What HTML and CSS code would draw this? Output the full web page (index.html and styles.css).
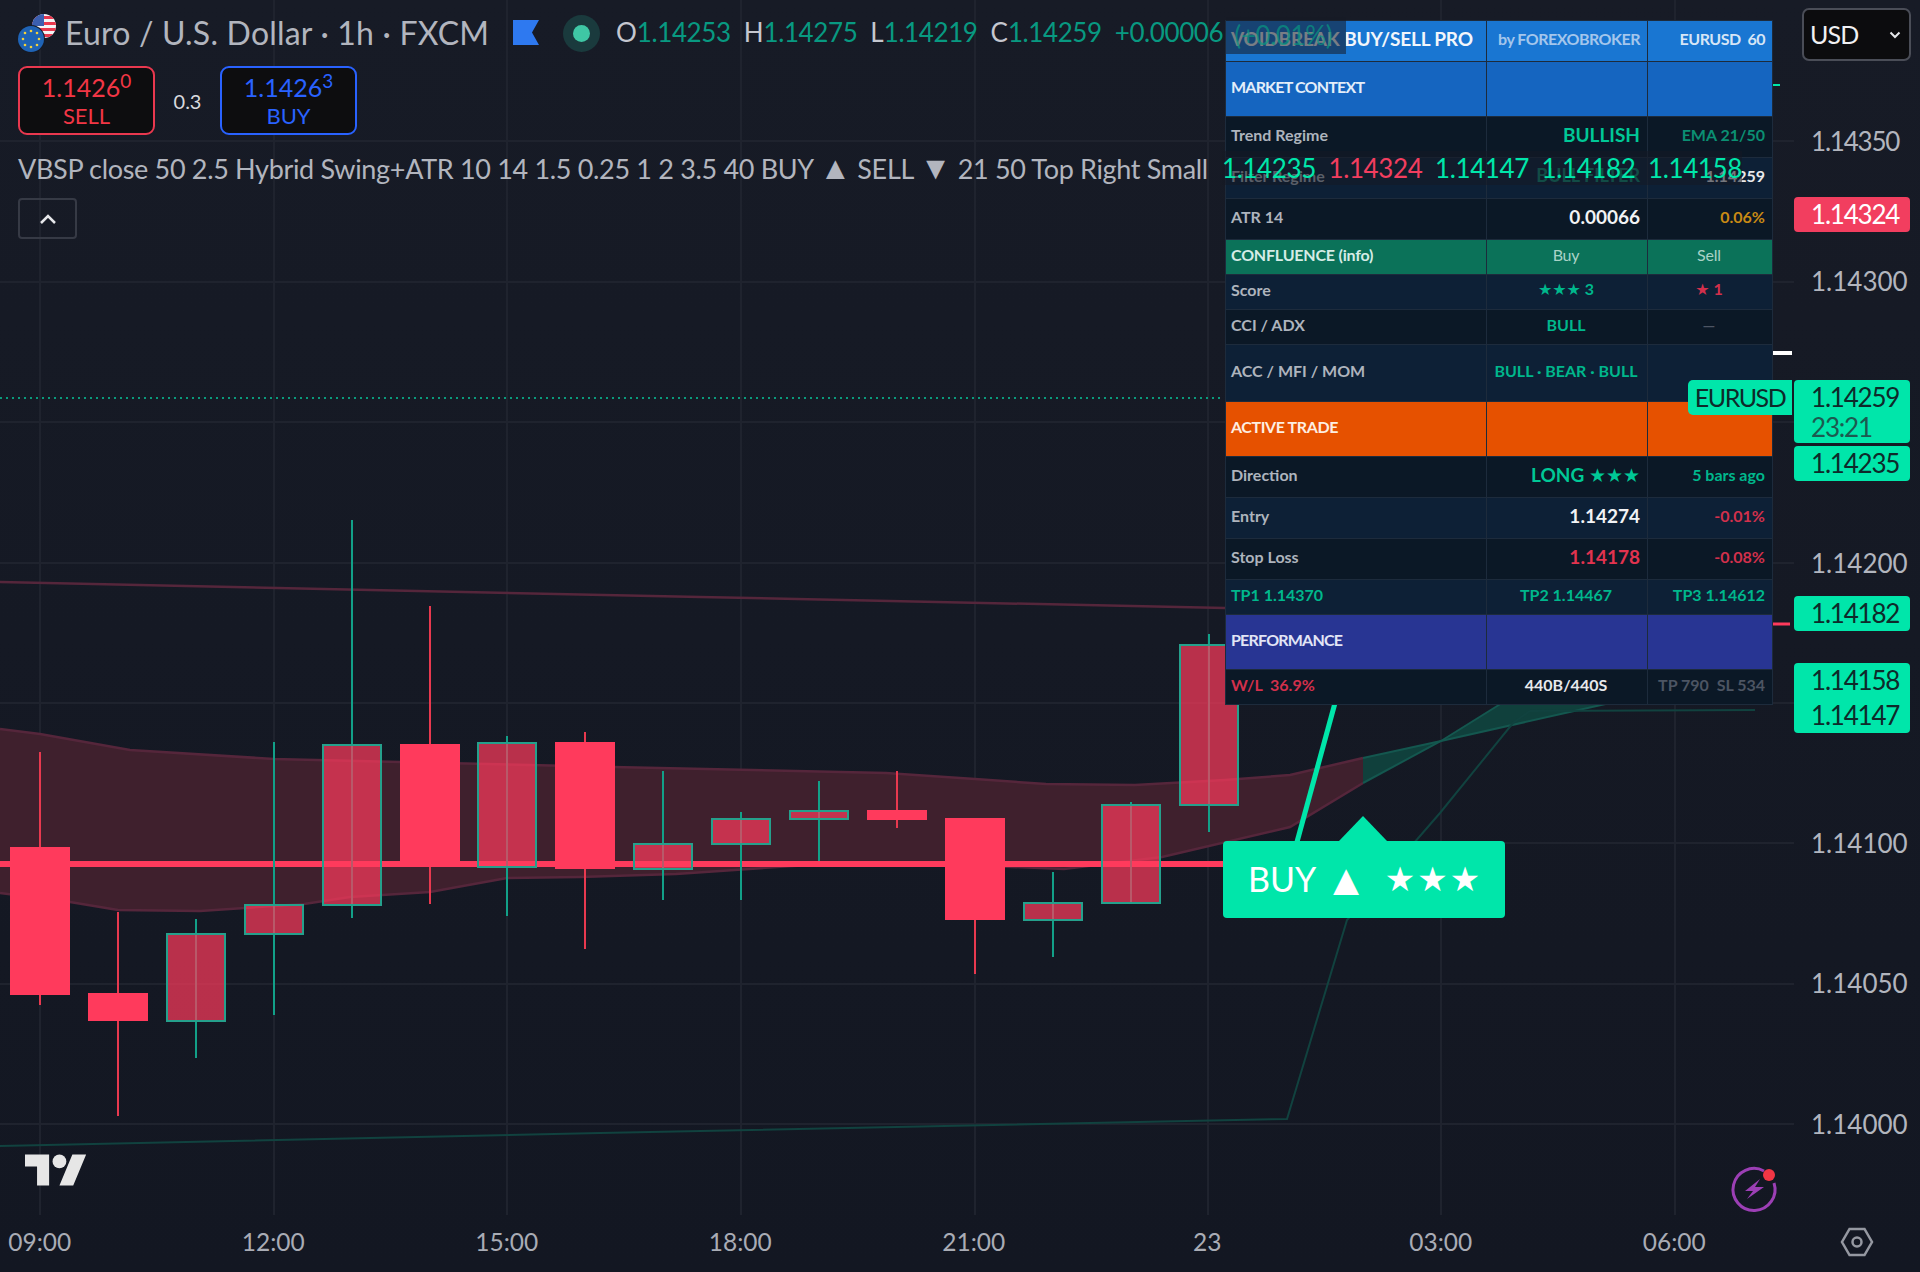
FILE: index.html
```html
<!DOCTYPE html>
<html lang="en">
<head>
    <meta charset="UTF-8">
    <meta name="viewport" content="width=device-width, initial-scale=1.0">
    <title>EURUSD 1h chart</title>
    <link rel="stylesheet" href="styles.css">
</head>
<body>

<div class="terminal">
    <div class="chart-pane">

        <!-- Chart drawing: grid, bands, lines, candles -->
        <svg class="chart-canvas" width="1794" height="1215" viewBox="0 0 1794 1215">
            <g class="grid">
                <line x1="40" y1="0" x2="40" y2="1215"/>
                <line x1="274" y1="0" x2="274" y2="1215"/>
                <line x1="507" y1="0" x2="507" y2="1215"/>
                <line x1="741" y1="0" x2="741" y2="1215"/>
                <line x1="975" y1="0" x2="975" y2="1215"/>
                <line x1="1208" y1="0" x2="1208" y2="1215"/>
                <line x1="1441" y1="0" x2="1441" y2="1215"/>
                <line x1="1675" y1="0" x2="1675" y2="1215"/>
                <line x1="0" y1="141" x2="1794" y2="141"/>
                <line x1="0" y1="282" x2="1794" y2="282"/>
                <line x1="0" y1="422" x2="1794" y2="422"/>
                <line x1="0" y1="563" x2="1794" y2="563"/>
                <line x1="0" y1="703" x2="1794" y2="703"/>
                <line x1="0" y1="843" x2="1794" y2="843"/>
                <line x1="0" y1="984" x2="1794" y2="984"/>
                <line x1="0" y1="1124" x2="1794" y2="1124"/>
            </g>

            <polygon class="band-red" points="0,729 40,734 130,750 274,759 400,762 613,767 886,773 975,779 1046,784 1135,785 1225,780 1290,775 1363,758 1363,783 1290,827 1162,857 1064,869 890,862 792,866 676,874 580,877 507,878 430,892 350,897 304,904 200,911 118,910 70,902 0,893"/>
            <polyline class="band-red-edge" points="0,729 40,734 130,750 274,759 400,762 613,767 886,773 975,779 1046,784 1135,785 1225,780 1290,775 1363,758"/>
            <polyline class="band-red-edge" points="0,893 70,902 118,910 200,911 304,904 350,897 430,892 507,878 580,877 676,874 792,866 890,862 1064,869 1162,857 1290,827 1363,783"/>
            <polyline class="band-red-edge" points="0,582 700,597 1225,608"/>

            <polygon class="band-green" points="1363,758 1441,741 1363,783"/>
            <polygon class="band-green" points="1441,741 1502,703 1610,703"/>
            <polyline class="band-green-edge" points="1363,758 1441,741 1610,703"/>
            <polyline class="band-green-edge" points="1363,783 1441,741 1502,703"/>
            <polyline class="trail-line" points="0,1146 600,1133 1287,1119 1347,920 1440,813 1513,723 1530,711 1755,710"/>

            <line class="signal-line" x1="1297" y1="842" x2="1335" y2="703"/>
            <line class="dotted-line" x1="0" y1="398" x2="1224" y2="398"/>
            <line class="level-line" x1="0" y1="864" x2="1224" y2="864"/>

            <!-- candles, 78px apart -->
            <g class="bear"><line x1="40" y1="752" x2="40" y2="1005"/><rect x="10" y="847" width="60" height="148"/></g>
            <g class="bear"><line x1="118" y1="912" x2="118" y2="1116"/><rect x="88" y="993" width="60" height="28"/></g>
            <g class="bull"><line x1="196" y1="919" x2="196" y2="1058"/><rect x="167" y="934" width="58" height="87"/></g>
            <g class="bull"><line x1="274" y1="742" x2="274" y2="1015"/><rect x="245" y="905" width="58" height="29"/></g>
            <g class="bull"><line x1="352" y1="520" x2="352" y2="918"/><rect x="323" y="745" width="58" height="160"/></g>
            <g class="bear"><line x1="430" y1="606" x2="430" y2="904"/><rect x="400" y="744" width="60" height="123"/></g>
            <g class="bull"><line x1="507" y1="736" x2="507" y2="916"/><rect x="478" y="743" width="58" height="124"/></g>
            <g class="bear"><line x1="585" y1="732" x2="585" y2="949"/><rect x="555" y="742" width="60" height="127"/></g>
            <g class="bull"><line x1="663" y1="771" x2="663" y2="900"/><rect x="634" y="844" width="58" height="25"/></g>
            <g class="bull"><line x1="741" y1="812" x2="741" y2="900"/><rect x="712" y="819" width="58" height="25"/></g>
            <g class="bull"><line x1="819" y1="781" x2="819" y2="861"/><rect x="790" y="811" width="58" height="8"/></g>
            <g class="bear"><line x1="897" y1="771" x2="897" y2="828"/><rect x="867" y="810" width="60" height="10"/></g>
            <g class="bear"><line x1="975" y1="818" x2="975" y2="974"/><rect x="945" y="818" width="60" height="102"/></g>
            <g class="bull"><line x1="1053" y1="872" x2="1053" y2="957"/><rect x="1024" y="903" width="58" height="17"/></g>
            <g class="bull"><line x1="1131" y1="802" x2="1131" y2="903"/><rect x="1102" y="805" width="58" height="98"/></g>
            <g class="bull"><line x1="1209" y1="634" x2="1209" y2="832"/><rect x="1180" y="645" width="58" height="160"/></g>

            <line class="tick-green" x1="1772" y1="85" x2="1780" y2="85"/>
            <line class="tick-white" x1="1772" y1="353" x2="1792" y2="353"/>
            <line class="tick-red" x1="1772" y1="624" x2="1790" y2="624"/>
        </svg>

        <!-- Legend -->
        <div class="legend">
            <div class="legend-title">
                <svg class="symbol-flags" width="44" height="50" viewBox="0 0 44 50">
                    <clipPath id="us-clip"><circle cx="26" cy="18" r="12"/></clipPath>
                    <g clip-path="url(#us-clip)">
                        <rect x="14" y="6" width="24" height="24" fill="#f4f4f6"/>
                        <rect x="14" y="8" width="24" height="3" fill="#e8394f"/>
                        <rect x="14" y="14" width="24" height="3" fill="#e8394f"/>
                        <rect x="14" y="20" width="24" height="3" fill="#e8394f"/>
                        <rect x="14" y="26" width="24" height="3" fill="#e8394f"/>
                        <rect x="14" y="6" width="12" height="12" fill="#3b5fb0"/>
                    </g>
                    <circle cx="13" cy="31" r="14" fill="#161a25"/>
                    <circle cx="13" cy="31" r="13" fill="#1f63b5"/>
                    <g fill="#f2d13c">
                        <circle cx="13" cy="23" r="1.3"/><circle cx="19" cy="25" r="1.3"/><circle cx="21" cy="31" r="1.3"/>
                        <circle cx="19" cy="37" r="1.3"/><circle cx="13" cy="39" r="1.3"/><circle cx="7" cy="37" r="1.3"/>
                        <circle cx="5" cy="31" r="1.3"/><circle cx="7" cy="25" r="1.3"/>
                    </g>
                </svg>
                <span class="symbol-name">Euro / U.S. Dollar · 1h · FXCM</span>
                <svg class="symbol-flag" width="26" height="25" viewBox="0 0 26 25"><path d="M0 0H26L19 12.5L26 25H0Z"/></svg>
                <span class="status-dot"><span class="status-dot-inner"></span></span>
                <span class="ohlc">
                    <span class="ohlc-item">O<b>1.14253</b></span>
                    <span class="ohlc-item">H<b>1.14275</b></span>
                    <span class="ohlc-item">L<b>1.14219</b></span>
                    <span class="ohlc-item">C<b>1.14259</b></span>
                    <b class="ohlc-change">+0.00006</b>
                    <b class="ohlc-pct">(+0.01%)</b>
                </span>
            </div>

            <div class="trade-row">
                <div class="trade-btn trade-sell">
                    <div class="trade-price">1.1426<sup>0</sup></div>
                    <div class="trade-label">SELL</div>
                </div>
                <div class="spread">0.3</div>
                <div class="trade-btn trade-buy">
                    <div class="trade-price">1.1426<sup>3</sup></div>
                    <div class="trade-label">BUY</div>
                </div>
            </div>

            <div class="study-row">
                <span class="study-name">VBSP close 50 2.5 Hybrid Swing+ATR 10 14 1.5 0.25 1 2 3.5 40 BUY <span class="study-arrow">▲</span> SELL <span class="study-arrow">▼</span> 21 50 Top Right Small</span>
                <span class="study-values">
                    <span class="val-green">1.14235</span>
                    <span class="val-red">1.14324</span>
                    <span class="val-green">1.14147</span>
                    <span class="val-green">1.14182</span>
                    <span class="val-green">1.14158</span>
                </span>
            </div>

            <div class="collapse-btn">
                <svg width="18" height="10" viewBox="0 0 18 10"><path d="M2 9L9 2L16 9"/></svg>
            </div>
        </div>

        <!-- Indicator dashboard -->
        <table class="dash">
            <colgroup>
                <col class="col-label">
                <col class="col-main">
                <col class="col-side">
            </colgroup>
            <tr class="row-head">
                <td class="head-title">VOIDBREAK BUY/SELL PRO</td>
                <td class="r head-by">by FOREXOBROKER</td>
                <td class="r head-sym">EURUSD&nbsp; 60</td>
            </tr>
            <tr class="row-section sec-blue"><td>MARKET CONTEXT</td><td></td><td></td></tr>
            <tr class="row-data">
                <td class="lbl">Trend Regime</td>
                <td class="r big-green">BULLISH</td>
                <td class="r dim-green">EMA 21/50</td>
            </tr>
            <tr class="row-data alt">
                <td class="lbl">Filter Regime</td>
                <td class="r filter-text">BULL FILTER</td>
                <td class="r lbl-white">1.14259</td>
            </tr>
            <tr class="row-data">
                <td class="lbl">ATR 14</td>
                <td class="r big-white">0.00066</td>
                <td class="r amber">0.06%</td>
            </tr>
            <tr class="row-slim sec-green"><td>CONFLUENCE (info)</td><td class="c soft">Buy</td><td class="c soft">Sell</td></tr>
            <tr class="row-slim alt">
                <td class="lbl">Score</td>
                <td class="c txt-green">★★★ 3</td>
                <td class="c txt-red">★ 1</td>
            </tr>
            <tr class="row-slim">
                <td class="lbl">CCI / ADX</td>
                <td class="c txt-green">BULL</td>
                <td class="c muted">—</td>
            </tr>
            <tr class="row-tall alt">
                <td class="lbl">ACC / MFI / MOM</td>
                <td class="c txt-green">BULL · BEAR · BULL</td>
                <td></td>
            </tr>
            <tr class="row-section sec-orange"><td>ACTIVE TRADE</td><td></td><td></td></tr>
            <tr class="row-data">
                <td class="lbl">Direction</td>
                <td class="r big-green">LONG ★★★</td>
                <td class="r txt-green">5 bars ago</td>
            </tr>
            <tr class="row-data alt">
                <td class="lbl">Entry</td>
                <td class="r big-white">1.14274</td>
                <td class="r txt-red">-0.01%</td>
            </tr>
            <tr class="row-data">
                <td class="lbl">Stop Loss</td>
                <td class="r big-red">1.14178</td>
                <td class="r txt-red">-0.08%</td>
            </tr>
            <tr class="row-slim alt">
                <td class="txt-green">TP1 1.14370</td>
                <td class="c txt-green">TP2 1.14467</td>
                <td class="r txt-green">TP3 1.14612</td>
            </tr>
            <tr class="row-section sec-indigo"><td>PERFORMANCE</td><td></td><td></td></tr>
            <tr class="row-slim">
                <td class="txt-red">W/L&nbsp; 36.9%</td>
                <td class="c lbl-white">440B/440S</td>
                <td class="r muted">TP 790&nbsp; SL 534</td>
            </tr>
        </table>

        <!-- Signal label -->
        <div class="signal-label">
            <span>BUY</span>
            <span class="signal-arrow">▲</span>
            <span class="signal-stars">★★★</span>
        </div>

        <div class="symbol-tag">EURUSD</div>

        <svg class="tv-logo" width="62" height="32" viewBox="0 4 36 18">
            <path d="M14 22H7V11H0V4h14v18zM28 22h-8l7.5-18h8L28 22z"/>
            <circle cx="20" cy="8" r="4"/>
        </svg>

        <svg class="bolt-icon" width="52" height="52" viewBox="0 0 52 52">
            <path class="bolt-ring" d="M36 8A21 21 0 1 0 46 20"/>
            <path class="bolt-mark" d="M32 16L17 28H25L19 36L36 24H27Z"/>
            <circle class="bolt-dot" cx="41" cy="12" r="6"/>
        </svg>
    </div>

    <!-- Price scale -->
    <div class="price-axis">
        <div class="axis-currency">USD
            <svg width="12" height="8" viewBox="0 0 12 8"><path d="M1.5 1.5L6 6L10.5 1.5"/></svg>
        </div>
        <div class="axis-tick tick-tight" style="top: 141px">1.14350</div>
        <div class="axis-tick" style="top: 281px">1.14300</div>
        <div class="axis-tick" style="top: 563px">1.14200</div>
        <div class="axis-tick" style="top: 843px">1.14100</div>
        <div class="axis-tick" style="top: 983px">1.14050</div>
        <div class="axis-tick" style="top: 1124px">1.14000</div>

        <div class="axis-tag tag-red" style="top: 197px">1.14324</div>
        <div class="axis-tag tag-green tag-last" style="top: 380px">1.14259<span class="tag-time">23:21</span></div>
        <div class="axis-tag tag-green" style="top: 446px">1.14235</div>
        <div class="axis-tag tag-green" style="top: 596px">1.14182</div>
        <div class="axis-tag tag-green tag-pair" style="top: 663px">1.14158<span>1.14147</span></div>
    </div>

    <!-- Time scale -->
    <div class="time-axis">
        <span>09:00</span>
        <span>12:00</span>
        <span>15:00</span>
        <span>18:00</span>
        <span>21:00</span>
        <span>23</span>
        <span>03:00</span>
        <span>06:00</span>
    </div>
    <div class="axis-corner">
        <svg width="34" height="30" viewBox="0 0 34 30">
            <path d="M9.5 2H24.500L32 15L24.500 28H9.500L2 15Z"/>
            <circle cx="17" cy="15" r="4.500"/>
        </svg>
    </div>
</div>

</body>
</html>
```

FILE: styles.css
```css
/* Page and main layout */
body {
    margin: 0;
    background-color: #161a25;
    font-family: Lato, "Liberation Sans", "DejaVu Sans", sans-serif;
    color: #b2b5be;
}

.terminal {
    width: 1920px;
    height: 1272px;
    display: grid;
    grid-template-columns: 1794px 126px;
    grid-template-rows: 1215px 57px;
    overflow: hidden;
    background: linear-gradient(#171b26, #131722);
}

.chart-pane {
    position: relative;
    overflow: hidden;
}

.chart-canvas {
    position: absolute;
    top: 0;
    left: 0;
}

/* Chart drawing */
.grid line {
    stroke: #1f232e;
    stroke-width: 2;
}

.band-red { fill: #3f202d; }
.band-green { fill: #10403c; }

.band-red-edge {
    fill: none;
    stroke: #55263b;
    stroke-width: 2.5;
}

.band-green-edge {
    fill: none;
    stroke: #14574f;
    stroke-width: 2;
}

.trail-line {
    fill: none;
    stroke: #11423f;
    stroke-width: 2;
}

.signal-line {
    stroke: #00e6aa;
    stroke-width: 5;
}

.dotted-line {
    stroke: #0a9a7c;
    stroke-width: 2;
    stroke-dasharray: 2 4;
}

.level-line {
    stroke: #ff3a5c;
    stroke-width: 6;
}

.bear line {
    stroke: #e8394f;
    stroke-width: 2;
}

.bear rect { fill: #ff3a5c; }

.bull line {
    stroke: #12a088;
    stroke-width: 2;
}

.bull rect {
    fill: rgba(255, 58, 92, 0.7);
    stroke: #25a08c;
    stroke-width: 2;
}

.tick-green { stroke: #00e6aa; stroke-width: 2; }
.tick-white { stroke: #ffffff; stroke-width: 4; }
.tick-red { stroke: #ff3a5c; stroke-width: 3; }

/* Legend */
.legend {
    position: relative;
    z-index: 3;
    padding-left: 18px;
    white-space: nowrap;
}

.legend-title {
    display: flex;
    align-items: center;
    height: 66px;
}

.symbol-flags {
    margin-right: 3px;
}

.symbol-name {
    font-size: 32px;
    letter-spacing: 0.2px;
    width: 448px;
    margin-top: -2px;
}

.symbol-flag {
    fill: #2e79f0;
    margin-top: -2px;
}

.status-dot {
    width: 37px;
    height: 37px;
    margin-left: 24px;
    border-radius: 50%;
    background-color: #1a3a3d;
    display: flex;
    align-items: center;
    justify-content: center;
}

.status-dot-inner {
    width: 17px;
    height: 17px;
    border-radius: 50%;
    background-color: #3fc7a5;
}

.ohlc {
    display: flex;
    align-items: center;
    margin-left: 16px;
    font-size: 26px;
    margin-top: -2px;
    color: #c5c7cf;
}

.ohlc-item { margin-right: 13px; }

.ohlc b {
    font-weight: 400;
    letter-spacing: -0.4px;
    color: #089981;
}

.ohlc .ohlc-pct {
    margin-left: 3px;
    padding: 0 14px 0 8px;
    height: 37px;
    line-height: 37px;
    margin-top: 6px;
    background-color: rgba(22, 26, 37, 0.55);
    color: rgba(8, 153, 129, 0.7);
}

.trade-row {
    display: flex;
    align-items: center;
    height: 69px;
}

.trade-btn {
    width: 137px;
    height: 69px;
    box-sizing: border-box;
    border: 2px solid #e9384f;
    border-radius: 9px;
    background-color: #0d0d0f;
    text-align: center;
    color: #f23645;
}

.trade-buy {
    border-color: #2962ff;
    color: #2962ff;
}

.trade-price {
    font-size: 25px;
    line-height: 30px;
    margin-top: 4px;
}

.trade-price sup {
    font-size: 19px;
    line-height: 0;
}

.trade-label {
    font-size: 22px;
    line-height: 28px;
}

.spread {
    width: 65px;
    text-align: center;
    font-size: 20px;
    color: #d8d9de;
}

.study-row {
    display: flex;
    align-items: center;
    height: 50px;
    margin-top: 8px;
    margin-bottom: 4px;
    font-size: 27px;
}

.study-name {
    width: 1204px;
    letter-spacing: -0.33px;
}

.study-arrow {
    font-size: 32px;
    line-height: 0;
}

.study-values {
    display: flex;
    gap: 12.7px;
    height: 34px;
    line-height: 34px;
    letter-spacing: -0.4px;
    background-color: rgba(22, 26, 37, 0.55);
    font-size: 26px;
}

.val-green { color: #00e6aa; }
.val-red { color: #f23e5f; }

.collapse-btn {
    width: 59px;
    height: 41px;
    margin-top: 5px;
    box-sizing: border-box;
    border: 2px solid #363a45;
    border-radius: 4px;
    display: flex;
    align-items: center;
    justify-content: center;
}

.collapse-btn path {
    fill: none;
    stroke: #e6e7ea;
    stroke-width: 2.5;
}

/* Indicator dashboard */
.dash {
    position: absolute;
    top: 20px;
    left: 1225px;
    z-index: 2;
    width: 547px;
    table-layout: fixed;
    border-collapse: collapse;
    font-size: 16px;
    font-weight: 700;
    background-color: #0b1826;
    color: #aeb4bd;
}

.dash td {
    padding: 0 7px 6px 5px;
    border: 1px solid #1d2b3c;
    white-space: nowrap;
    overflow: hidden;
}

.col-label { width: 261px; }
.col-main { width: 161px; }
.col-side { width: 125px; }

.row-head { height: 41px; background-color: #1976d2; }
.row-section { height: 55px; }
.row-data { height: 41px; }
.row-slim { height: 35px; }
.row-tall { height: 57px; }
.alt { background-color: #0d2036; }

.sec-blue { background-color: #1565c0; color: #e3eefa; letter-spacing: -0.8px; }
.sec-green { background-color: #0b7259; color: #d5ece6; letter-spacing: -0.2px; }
.sec-orange { background-color: #e65100; color: #fdeee2; letter-spacing: -0.4px; }
.sec-indigo { background-color: #283593; color: #e2e5f6; letter-spacing: -0.8px; }

.r { text-align: right; }
.c { text-align: center; }

.dash .head-title {
    font-size: 19px;
    letter-spacing: -0.15px;
    color: #f2f6fb;
    overflow: visible;
}

.head-by { color: #a4c6ec; letter-spacing: -0.5px; }
.head-sym { color: #d6e5f6; letter-spacing: -0.5px; }

.soft { color: #a9d3c7; font-weight: 400; }
.big-green { color: #00c896; font-size: 19px; }
.big-white { color: #f2f3f5; font-size: 19px; }
.big-red { color: #e2334f; font-size: 19px; }
.dim-green { color: #0b8f73; }
.filter-text { color: #0f8a70; font-size: 18px; }
.lbl-white { color: #e8e9ec; }
.amber { color: #c98a14; }
.txt-green { color: #00b78c; }
.txt-red { color: #d2304c; }
.muted { color: #4d5563; }

/* Overlays on the chart */
.signal-label {
    position: absolute;
    top: 841px;
    left: 1223px;
    width: 282px;
    height: 77px;
    box-sizing: border-box;
    padding: 0 0 3px 25px;
    display: flex;
    align-items: center;
    border-radius: 4px;
    background-color: #00e6aa;
    color: #ffffff;
    font-size: 34px;
    white-space: nowrap;
}

.signal-arrow {
    margin-left: 8px;
    font-size: 44px;
    line-height: 1;
}

.signal-stars {
    margin-left: 17px;
    letter-spacing: 2px;
}

.signal-label::before {
    content: "";
    position: absolute;
    top: -25px;
    left: 116px;
    border-left: 24px solid transparent;
    border-right: 24px solid transparent;
    border-bottom: 25px solid #00e6aa;
}

.symbol-tag {
    position: absolute;
    top: 380px;
    left: 1688px;
    z-index: 4;
    width: 104px;
    height: 35px;
    line-height: 35px;
    text-align: center;
    border-radius: 5px 0 0 5px;
    background-color: #00e6aa;
    color: #0e2a2a;
    font-size: 25px;
    letter-spacing: -1.5px;
}

.tv-logo {
    position: absolute;
    top: 1154px;
    left: 25px;
    fill: #e6e6e6;
}

.bolt-icon {
    position: absolute;
    top: 1163px;
    left: 1728px;
}

.bolt-ring {
    fill: none;
    stroke: #9c3fb5;
    stroke-width: 3;
}

.bolt-mark { fill: #9c3fb5; }
.bolt-dot { fill: #f23645; }

/* Price scale */
.price-axis {
    position: relative;
    grid-row: 1;
    grid-column: 2;
}

.axis-currency {
    position: absolute;
    top: 8px;
    left: 8px;
    width: 109px;
    height: 53px;
    box-sizing: border-box;
    padding-left: 6px;
    line-height: 49px;
    letter-spacing: -0.8px;
    border: 2px solid #4a4d57;
    border-radius: 7px;
    background-color: #0c0c0e;
    color: #f0f0f2;
    font-size: 25px;
}

.axis-currency svg {
    position: absolute;
    top: 21px;
    right: 8px;
}

.axis-currency path {
    fill: none;
    stroke: #e6e7ea;
    stroke-width: 2;
}

.axis-tick {
    position: absolute;
    left: 17px;
    transform: translateY(-50%);
    font-size: 26px;
    color: #b2b5be;
}

.tick-tight { letter-spacing: -1.2px; }

.axis-tag {
    position: absolute;
    left: 0;
    width: 116px;
    height: 35px;
    box-sizing: border-box;
    padding-left: 17px;
    line-height: 35px;
    border-radius: 4px;
    font-size: 26px;
    letter-spacing: -1.2px;
}

.tag-red {
    background-color: #f23e5f;
    color: #ffffff;
}

.tag-green {
    background-color: #00e6aa;
    color: #0e2a2a;
}

.tag-last { height: 63px; }

.tag-time {
    display: block;
    line-height: 24px;
    color: #1c5a50;
}

.tag-pair { height: 70px; }

.tag-pair span {
    display: block;
}

/* Time scale */
.time-axis {
    grid-row: 2;
    grid-column: 1;
    display: grid;
    grid-template-columns: repeat(8, 233.5px);
    margin-left: -77px;
    padding-top: 12px;
    font-size: 24.5px;
    text-align: center;
    color: #a9acb5;
}

.axis-corner {
    grid-row: 2;
    grid-column: 2;
    padding: 12px 0 0 46px;
}

.axis-corner path,
.axis-corner circle {
    fill: none;
    stroke: #9598a1;
    stroke-width: 2.5;
}
```
